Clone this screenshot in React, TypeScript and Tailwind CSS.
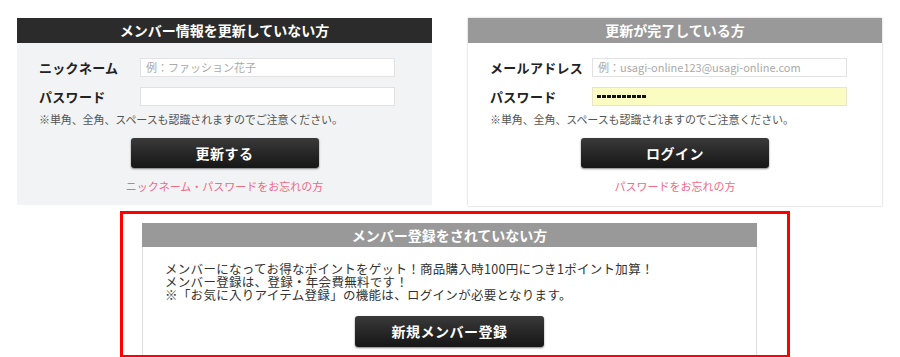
const FONT = "font-['Noto_Sans_CJK_JP','Noto_Sans',sans-serif]"

const DarkButton = ({ label, w = "w-[188px]", h = "h-[30px]" }: { label: string; w?: string; h?: string }) => (
    <button
        className={`${w} ${h} rounded-[3px] bg-gradient-to-b from-[#3a3a3a] to-[#161616] text-white text-[14px] font-bold tracking-[0.5px] shadow-[0_1px_2px_rgba(0,0,0,0.5)]`}
    >
        {label}
    </button>
)

const Row = ({ label, children, labelW }: { label: string; children: React.ReactNode; labelW: string }) => (
    <div className="flex items-center">
        <span className={`${labelW} text-[13px] font-bold text-[#222] tracking-[0.3px]`}>{label}</span>
        {children}
    </div>
)

const Note = () => (
    <p className="mt-[6px] h-[14px] leading-[14px] text-[11px] text-[#555] tracking-[-0.1px]">
        ※単角、全角、スペースも認識されますのでご注意ください。
    </p>
)

const App = () => {
    return (
        <div className={`w-[900px] h-[357px] bg-white overflow-hidden ${FONT}`}>
            <div className="flex gap-[36px] pl-[17px] pt-[18px]">
                {/* left panel */}
                <section className="w-[415px] h-[187px] bg-[#f1f3f4] flex flex-col">
                    <h3 className="h-[25px] leading-[25px] bg-[#2b2b2b] text-white text-center text-[14px] font-bold">
                        メンバー情報を更新していない方
                    </h3>
                    <div className="pl-[22px] pr-[37px] pt-[15px] flex flex-col">
                        <div className="flex flex-col gap-[9px]">
                            <Row label="ニックネーム" labelW="w-[101px]">
                                <div className="flex-1 h-[19px] bg-white border border-[#e2e2e2] px-[5px] text-[11px] leading-[17px] text-[#aaa]">
                                    例：ファッション花子
                                </div>
                            </Row>
                            <Row label="パスワード" labelW="w-[101px]">
                                <div className="flex-1 h-[19px] bg-white border border-[#e2e2e2]" />
                            </Row>
                        </div>
                        <Note />
                        <div className="mt-[12px] flex justify-center">
                            <div className="ml-[15px]">
                                <DarkButton label="更新する" />
                            </div>
                        </div>
                        <p className="mt-[11px] ml-[15px] text-center text-[11px] leading-[14px] text-[#f06a86]">
                            ニックネーム・パスワードをお忘れの方
                        </p>
                    </div>
                </section>

                {/* right panel */}
                <section className="w-[414px] h-[188px] bg-white flex flex-col shadow-[0_0_2px_rgba(0,0,0,0.25)]">
                    <h3 className="h-[25px] leading-[25px] bg-[#999999] text-white text-center text-[14px] font-bold">
                        更新が完了している方
                    </h3>
                    <div className="pl-[22px] pr-[35px] pt-[15px] flex flex-col">
                        <div className="flex flex-col gap-[9px]">
                            <Row label="メールアドレス" labelW="w-[102px]">
                                <div className="flex-1 h-[19px] bg-white border border-[#e2e2e2] px-[5px] text-[11px] leading-[17px] text-[#aaa]">
                                    例：usagi-online123@usagi-online.com
                                </div>
                            </Row>
                            <Row label="パスワード" labelW="w-[102px]">
                                <div className="flex-1 h-[19px] bg-[#fafcc2] border border-[#e6e6c8] px-[4px] flex items-center gap-[1px]">
                                    {Array.from({ length: 10 }).map((_, i) => (
                                        <span key={i} className="w-[4px] h-[3px] bg-[#111]" />
                                    ))}
                                </div>
                            </Row>
                        </div>
                        <Note />
                        <div className="mt-[12px] flex justify-center">
                            <div className="ml-[13px]">
                                <DarkButton label="ログイン" />
                            </div>
                        </div>
                        <p className="mt-[11px] ml-[13px] text-center text-[11px] leading-[14px] text-[#f06a86]">
                            パスワードをお忘れの方
                        </p>
                    </div>
                </section>
            </div>

            {/* register box */}
            <div className="ml-[120px] mt-[5px] w-[670px] h-[147px] border-[3px] border-[#ff0000] pt-[9px] pl-[19px]">
                <section className="w-[615px] h-full flex flex-col">
                    <h3 className="h-[24px] leading-[24px] bg-[#999999] text-white text-center text-[14px] font-bold">
                        メンバー登録をされていない方
                    </h3>
                    <div className="flex-1 border-x border-[#dedede] pl-[22px] pt-[15px] flex flex-col">
                        <div className="text-[12.5px] leading-[13px] tracking-[0.3px] text-[#333]">
                            <p>メンバーになってお得なポイントをゲット！商品購入時100円につき1ポイント加算！</p>
                            <p>メンバー登録は、登録・年会費無料です！</p>
                            <p>※「お気に入りアイテム登録」の機能は、ログインが必要となります。</p>
                        </div>
                        <div className="mt-[15px] flex justify-center pr-[22px]">
                            <DarkButton label="新規メンバー登録" w="w-[189px]" h="h-[31px]" />
                        </div>
                    </div>
                </section>
            </div>
        </div>
    )
}

export default App
